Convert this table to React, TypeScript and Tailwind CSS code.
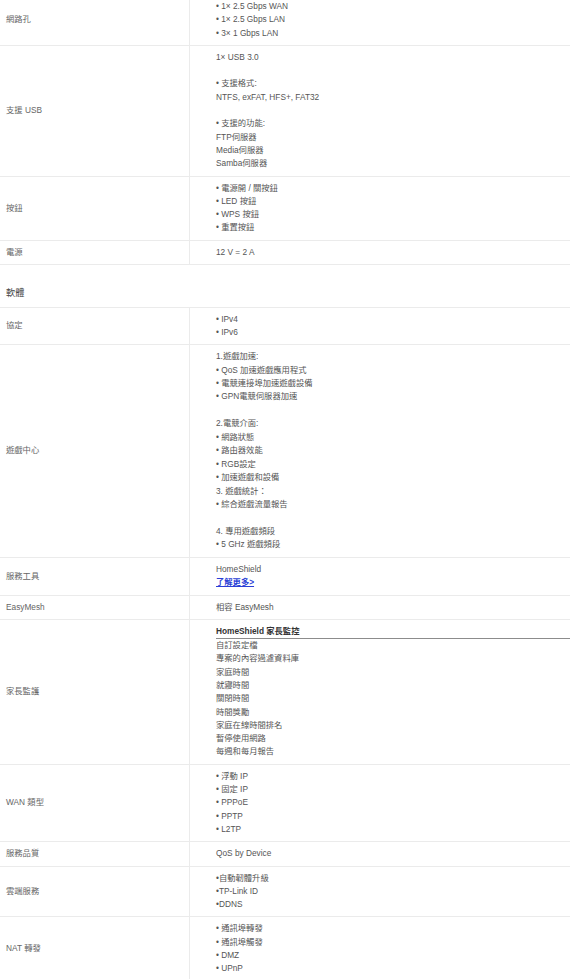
import React from "react";

type Row = { label: string; lines?: string[]; custom?: React.ReactNode; leading?: string };

const L = (lines: string[], leading = "leading-[13.3px]") => (
  <div className={leading}>
    {lines.map((t, i) => (
      <div key={i} className="whitespace-pre">{t === "" ? "\u00a0" : t}</div>
    ))}
  </div>
);

function TableRow({ label, children, first }: { label: string; children: React.ReactNode; first?: boolean }) {
  return (
    <div className={"flex border-b border-[#ebebeb] " + (first ? "mt-[-5px]" : "")}>
      <div className="w-[190px] shrink-0 border-r border-[#ebebeb] pl-[6px] flex items-center text-[#666] leading-[13.3px]">
        {label}
      </div>
      <div className="flex-1 pl-[26px] py-[5px] text-[#555]">{children}</div>
    </div>
  );
}

export default function App() {
  return (
    <div
      className="w-[570px] h-[979px] overflow-hidden bg-white text-[8.3px]"
      style={{ fontFamily: '"Liberation Sans", Arial, "Noto Sans CJK TC", sans-serif' }}
    >
      <TableRow label="網路孔" first>
        {L(["• 1× 2.5 Gbps WAN", "• 1× 2.5 Gbps LAN", "• 3× 1 Gbps LAN"])}
      </TableRow>
      <TableRow label="支援 USB">
        {L([
          "1× USB 3.0",
          "",
          "• 支援格式:",
          "NTFS, exFAT, HFS+, FAT32",
          "",
          "• 支援的功能:",
          "FTP伺服器",
          "Media伺服器",
          "Samba伺服器",
        ])}
      </TableRow>
      <TableRow label="按鈕">
        {L(["• 電源開 / 關按鈕", "• LED 按鈕", "• WPS 按鈕", "• 重置按鈕"])}
      </TableRow>
      <TableRow label="電源">{L(["12 V = 2 A"])}</TableRow>

      <div className="border-b border-[#ebebeb] pl-[6px] pt-[21.5px] pb-[6.7px] text-[9.2px] leading-[13.3px] text-[#444]">
        軟體
      </div>

      <TableRow label="協定">{L(["• IPv4", "• IPv6"])}</TableRow>
      <TableRow label="遊戲中心">
        {L(
          [
            "1.遊戲加速:",
            "• QoS 加速遊戲應用程式",
            "• 電競連接埠加速遊戲設備",
            "• GPN電競伺服器加速",
            "",
            "2.電競介面:",
            "• 網路狀態",
            "• 路由器效能",
            "• RGB設定",
            "• 加速遊戲和設備",
            "3. 遊戲統計：",
            "• 綜合遊戲流量報告",
            "",
            "4. 專用遊戲頻段",
            "• 5 GHz 遊戲頻段",
          ],
          "leading-[13.45px]"
        )}
      </TableRow>
      <TableRow label="服務工具">
        <div className="leading-[13.3px]">
          <div>HomeShield</div>
          <div>
            <a href="#" className="font-bold text-[#2b3fd6] underline">
              了解更多&gt;
            </a>
          </div>
        </div>
      </TableRow>
      <TableRow label="EasyMesh">{L(["相容 EasyMesh"])}</TableRow>
      <TableRow label="家長監護">
        <div className="leading-[13.3px]">
          <div className="font-bold text-[#333] border-b border-[#8c8c8c]">HomeShield 家長監控</div>
          {[
            "自訂設定檔",
            "專案的內容過濾資料庫",
            "家庭時間",
            "就寢時間",
            "關閉時間",
            "時間獎勵",
            "家庭在線時間排名",
            "暫停使用網路",
            "每週和每月報告",
          ].map((t) => (
            <div key={t}>{t}</div>
          ))}
        </div>
      </TableRow>
      <TableRow label="WAN 類型">
        {L(["• 浮動 IP", "• 固定 IP", "• PPPoE", "• PPTP", "• L2TP"])}
      </TableRow>
      <TableRow label="服務品質">{L(["QoS by Device"])}</TableRow>
      <TableRow label="雲端服務">{L(["•自動韌體升級", "•TP-Link ID", "•DDNS"])}</TableRow>
      <TableRow label="NAT 轉發">
        {L(["• 通訊埠轉發", "• 通訊埠觸發", "• DMZ", "• UPnP"])}
      </TableRow>
    </div>
  );
}
